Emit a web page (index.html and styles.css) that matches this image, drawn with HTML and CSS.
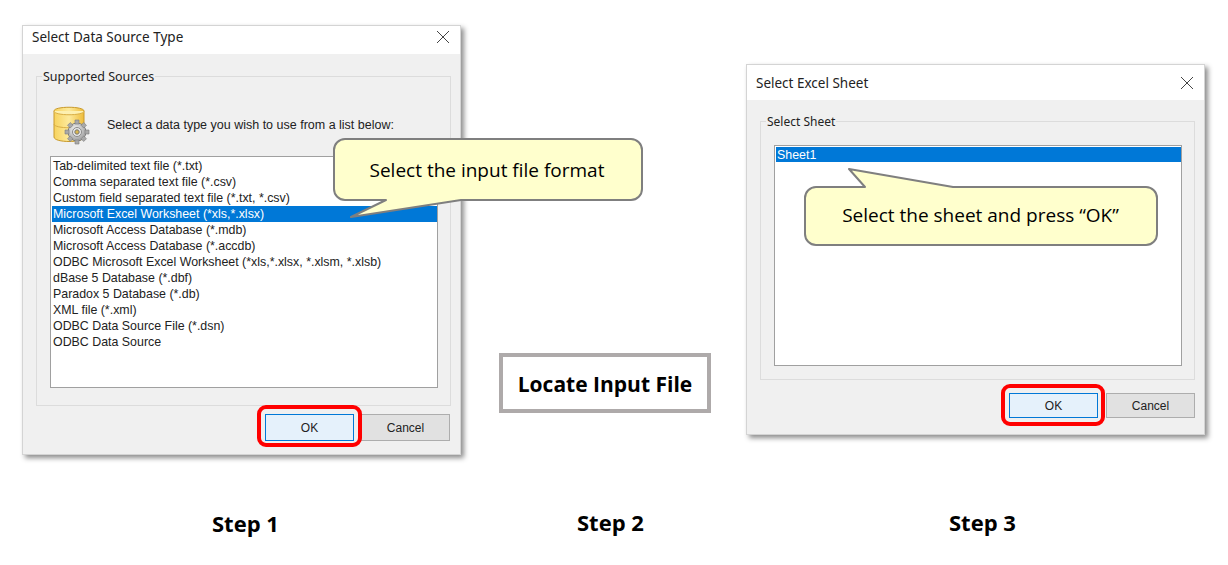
FILE: index.html
```html
<!DOCTYPE html>
<html lang="en">
<head>
<meta charset="utf-8">
<title>Locate Input File</title>
<link rel="stylesheet" href="styles.css">
</head>
<body>
<main class="stage">
  <section class="dialog dialog-source">
    <header class="titlebar">
      <span class="title">Select Data Source Type</span>
      <svg class="close" viewBox="0 0 14 14"><path d="M1 1 13 13M13 1 1 13"/></svg>
    </header>
    <div class="body">
      <fieldset class="group group-source">
        <legend>Supported Sources</legend>
        <div class="intro">
          <svg class="dbicon" viewBox="0 0 38 40">
            <defs>
              <linearGradient id="db" x1="0" x2="1" y1="0" y2="0"><stop offset="0" stop-color="#f7d35e"/><stop offset=".5" stop-color="#fdea9c"/><stop offset="1" stop-color="#eebc3a"/></linearGradient>
              <radialGradient id="gear" cx=".4" cy=".35" r=".8"><stop offset="0" stop-color="#f2f2f2"/><stop offset="1" stop-color="#8f8f8f"/></radialGradient>
            </defs>
            <path d="M1 6C1 1 31 1 31 6V32C31 38 1 38 1 32Z" fill="url(#db)" stroke="#c99a2c"/>
            <path d="M1 6C1 11 31 11 31 6" fill="#fdf0b0" stroke="#d9ae45"/>
            <path d="M1 19C1 24 31 24 31 19" fill="none" stroke="#d9ae45"/>
            <g transform="translate(24 27)">
              <circle r="9" fill="url(#gear)" stroke="#7c7c7c"/>
              <path d="M-2-12H2V-8H-2ZM-2 8H2V12H-2ZM-12-2H-8V2H-12ZM8-2H12V2H8ZM-9.500-6.700-6.700-9.500-4-6.800-6.800-4ZM6.800 4 9.500 6.700 6.700 9.500 4 6.800ZM6.700-9.500 9.500-6.700 6.800-4 4-6.800ZM-4 6.800-6.700 9.500-9.500 6.700-6.800 4Z" fill="#a9a9a9" stroke="#7c7c7c" stroke-width=".6"/>
              <circle r="4.500" fill="#e9e9e9" stroke="#8a8a8a"/>
              <circle r="2.200" fill="#d9b64e" stroke="#777"/>
            </g>
          </svg>
          <span>Select a data type you wish to use from a list below:</span>
        </div>
        <ul class="list list-source">
          <li>Tab-delimited text file (*.txt)</li>
          <li>Comma separated text file (*.csv)</li>
          <li>Custom field separated text file (*.txt, *.csv)</li>
          <li class="selected">Microsoft Excel Worksheet (*xls,*.xlsx)</li>
          <li>Microsoft Access Database (*.mdb)</li>
          <li>Microsoft Access Database (*.accdb)</li>
          <li>ODBC Microsoft Excel Worksheet (*xls,*.xlsx, *.xlsm, *.xlsb)</li>
          <li>dBase 5 Database (*.dbf)</li>
          <li>Paradox 5 Database (*.db)</li>
          <li>XML file (*.xml)</li>
          <li>ODBC Data Source File (*.dsn)</li>
          <li>ODBC Data Source</li>
        </ul>
      </fieldset>
      <div class="actions actions-source">
        <button class="btn btn-ok">OK</button>
        <button class="btn">Cancel</button>
      </div>
    </div>
  </section>

  <section class="dialog dialog-sheet">
    <header class="titlebar titlebar-sheet">
      <span class="title">Select Excel Sheet</span>
      <svg class="close" viewBox="0 0 14 14"><path d="M1 1 13 13M13 1 1 13"/></svg>
    </header>
    <div class="body">
      <fieldset class="group group-sheet">
        <legend>Select Sheet</legend>
        <ul class="list list-sheet">
          <li class="selected">Sheet1</li>
        </ul>
      </fieldset>
      <div class="actions actions-sheet">
        <button class="btn btn-ok">OK</button>
        <button class="btn">Cancel</button>
      </div>
    </div>
  </section>

  <div class="ring ring-one"></div>
  <div class="ring ring-two"></div>

  <div class="callout callout-one">
    <svg class="callout-shape" viewBox="0 0 311 81"><path d="M12 1H298A11 11 0 0 1 309 12V51A11 11 0 0 1 298 62H128L18 79 53 62H12A11 11 0 0 1 1 51V12A11 11 0 0 1 12 1Z"/></svg>
    <span class="callout-text">Select the input file format</span>
  </div>
  <div class="callout callout-two">
    <svg class="callout-shape" viewBox="0 0 355 78"><path d="M12 19H61L45 1 149 19H342A11 11 0 0 1 353 30V66A11 11 0 0 1 342 77H12A11 11 0 0 1 1 66V30A11 11 0 0 1 12 19Z"/></svg>
    <span class="callout-text">Select the sheet and press “OK”</span>
  </div>

  <div class="locate">Locate Input File</div>

  <div class="step step-one">Step 1</div>
  <div class="step step-two">Step 2</div>
  <div class="step step-three">Step 3</div>
</main>
</body>
</html>
```
FILE: styles.css
```css
* { box-sizing: border-box; }
html, body { margin: 0; padding: 0; background: #fff; }
body { width: 1228px; height: 565px; overflow: hidden; }
.stage { position: relative; width: 1228px; height: 565px; font-family: "Liberation Sans", Arial, sans-serif; }

.dialog { position: absolute; display: flex; flex-direction: column; background: #f0f0f0; border: 1px solid #d4d4d4; box-shadow: 3px 3px 5px rgba(0,0,0,.45); }
.dialog-source { left: 22px; top: 25px; width: 439px; height: 430px; }
.dialog-sheet { left: 746px; top: 64px; width: 459px; height: 371px; }

.titlebar { flex: none; height: 28px; display: flex; align-items: center; justify-content: space-between; background: #fff; padding: 0 10px 6px 9px; }
.titlebar-sheet { height: 35px; padding-bottom: 0; }
.title { font: 13.500px "Noto Sans", sans-serif; color: #222; }
.close { width: 14px; height: 14px; fill: none; stroke: #444; stroke-width: 1; }

.body { flex: 1; display: flex; flex-direction: column; min-height: 0; }
.group { flex: none; margin: 0; border: 1px solid #dcdcdc; padding: 0; position: relative; min-width: 0; }
.group legend { font: 12.500px "Noto Sans", sans-serif; color: #222; padding: 0 1px; margin-left: -8px; line-height: 17px; }
.group-source { margin: 14px 9px 0 13px; height: 338px; padding: 0 12px 0 13px; }
.group-sheet { margin: 13px 9px 0 13px; height: 267px; padding: 15px 12px 0 13px; }
.group-sheet legend { font-size: 12px; }

.intro { height: 71px; display: flex; align-items: center; gap: 16px; padding: 8px 0 0 3px; font-size: 12.500px; color: #222; }
.dbicon { width: 38px; height: 40px; flex: none; }

.list { list-style: none; margin: 0; padding: 1px 0 1px 1px; background: #fff; border: 1px solid #a0a0a0; font-size: 12.400px; color: #222; }
.list li { height: 16px; line-height: 16px; padding-left: 1px; white-space: nowrap; }
.list .selected { background: #0078d7; color: #fff; }
.list-source { height: 232px; }
.list-sheet { height: 221px; }
.list-sheet li { height: 15px; }

.actions { display: flex; justify-content: flex-end; gap: 7px; padding-right: 10px; }
.actions-source { padding-top: 8px; }
.actions-sheet { padding-top: 13px; padding-right: 9px; gap: 8px; }
.btn { width: 89px; height: 25px; padding: 0; background: #e1e1e1; border: 1px solid #adadad; font: 12px "Liberation Sans", Arial, sans-serif; color: #222; }
.btn-ok { background: #e5f1fb; border-color: #0078d7; }
.actions-source .btn { height: 27px; }

.ring { position: absolute; border: 4px solid #f00; border-radius: 9px; }
.ring-one { left: 257px; top: 405px; width: 105px; height: 42px; }
.ring-two { left: 1001px; top: 384px; width: 104px; height: 42px; }

.callout { position: absolute; display: flex; justify-content: center; font: 19px "Open Sans", sans-serif; color: #000; }
.callout-one { left: 333px; top: 138px; width: 311px; height: 81px; padding: 20px 3px 0 0; }
.callout-two { left: 804px; top: 168px; width: 355px; height: 78px; padding: 35px 2px 0 0; }
.callout-shape { position: absolute; inset: 0; width: 100%; height: 100%; fill: #ffffcd; stroke: #7f7f7f; stroke-width: 2; stroke-linejoin: round; }
.callout-text { position: relative; line-height: 25px; white-space: nowrap; }

.locate { position: absolute; left: 499px; top: 353px; width: 212px; height: 60px; padding-top: 2px; display: flex; align-items: center; justify-content: center; background: #fff; border: 4px solid #aeaaaa; font: 700 21px "Open Sans", sans-serif; color: #000; }

.step { position: absolute; font: 700 22px "Open Sans", sans-serif; color: #000; line-height: 26px; white-space: nowrap; }
.step-one { left: 212px; top: 510px; }
.step-two { left: 577px; top: 509px; }
.step-three { left: 949px; top: 509px; }
```
